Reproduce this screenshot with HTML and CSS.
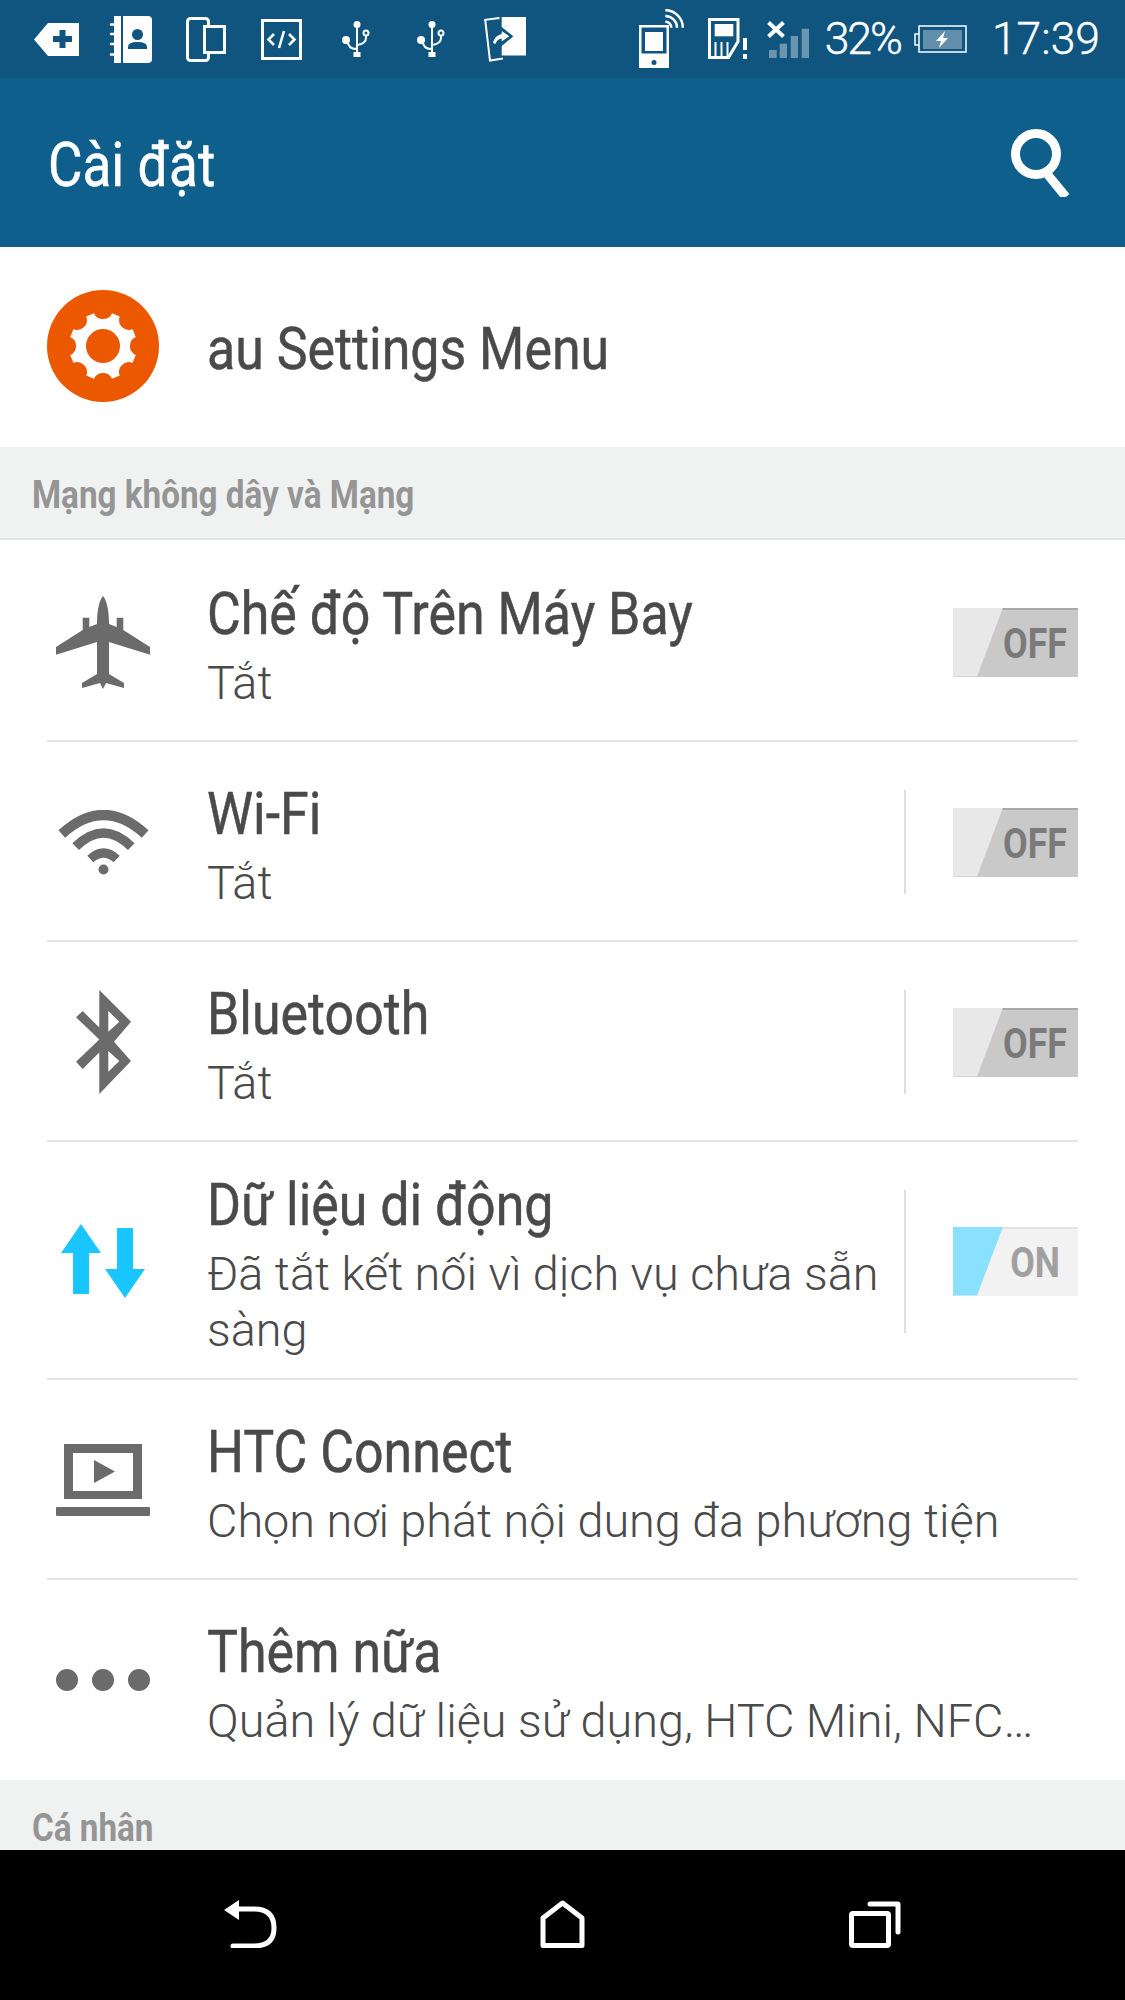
FILE: index.html
```html
<!DOCTYPE html>
<html lang="vi">
<head>
<meta charset="utf-8">
<meta name="viewport" content="width=device-width, initial-scale=1.0">
<title>Cài đặt</title>
<link rel="stylesheet" href="styles.css">
</head>
<body>
<div class="screen">
	<div class="statusbar">
		<div class="status-left">
			<svg class="ic-tag" width="45" height="33" viewBox="0 0 45 33"><path fill="#fff" fill-rule="evenodd" d="M0 16.500 14 0H45V33H14ZM25.500 7V13H19V19H25.500V25H31.500V19H38V13H31.500V7Z"/></svg>
			<svg class="ic-contacts" width="43" height="47" viewBox="0 0 43 47"><path fill="#fff" fill-rule="evenodd" d="M14 0H39Q43 0 43 4V43Q43 47 39 47H14ZM28.500 13A5.500 5.500 0 1 0 28.500 24 5.500 5.500 0 1 0 28.500 13ZM19 33H38V31Q38 26 28.500 26 19 26 19 31Z"/><path fill="#fff" d="M5 0H12V47H5Z"/><path fill="none" stroke="#fff" stroke-width="2.500" stroke-linecap="round" d="M2 8.500H9M2 18H9M2 28H9M2 38.500H9"/></svg>
			<svg class="ic-devices" width="40" height="45" viewBox="0 0 40 45"><rect x="1.500" y="1.500" width="21" height="42" rx="3" fill="none" stroke="#fff" stroke-width="3"/><rect x="18.500" y="9.500" width="20" height="26" fill="#0f5580" stroke="#fff" stroke-width="3"/></svg>
			<svg class="ic-code" width="41" height="41" viewBox="0 0 41 41"><rect x="1.500" y="1.500" width="38" height="38" fill="none" stroke="#fff" stroke-width="3"/><path fill="none" stroke="#fff" stroke-width="2.600" d="M13 15 7.500 20.500 13 26M28 15 33.500 20.500 28 26M23 12 18 29"/></svg>
			<svg class="ic-usb" width="28" height="36" viewBox="0 0 28 36"><circle cx="15" cy="3.500" r="3.500" fill="#fff"/><circle cx="4" cy="19" r="4" fill="#fff"/><circle cx="24" cy="12" r="2.500" fill="none" stroke="#fff" stroke-width="2"/><rect x="11.500" y="31" width="7" height="5" fill="#fff"/><path fill="none" stroke="#fff" stroke-width="2" d="M15 4V32M5 21 8 26Q10 28 15 28M24 14V17Q24 23 15 24"/></svg>
			<svg class="ic-usb" width="28" height="36" viewBox="0 0 28 36"><circle cx="15" cy="3.500" r="3.500" fill="#fff"/><circle cx="4" cy="19" r="4" fill="#fff"/><circle cx="24" cy="12" r="2.500" fill="none" stroke="#fff" stroke-width="2"/><rect x="11.500" y="31" width="7" height="5" fill="#fff"/><path fill="none" stroke="#fff" stroke-width="2" d="M15 4V32M5 21 8 26Q10 28 15 28M24 14V17Q24 23 15 24"/></svg>
			<svg class="ic-share" width="42" height="45" viewBox="0 0 42 45"><path fill="#fff" d="M17.700 0H42V38.500H17.700V29L29.300 19.300 17.700 10Z"/><path fill="none" stroke="#fff" stroke-width="2" d="M15.500 1 1.200 2.800 6 43.500 19 41.500"/><path fill="#fff" d="M17.700 14 25.300 19.300 17.700 24.500V21.500Q13 22 11.500 27L9 26Q10.500 18.500 17.700 17Z"/></svg>
		</div>
		<div class="status-right">
			<svg class="ic-phone" width="45" height="60" viewBox="0 0 45 60"><rect y="16" width="30" height="43" fill="#fff"/><rect x="2.500" y="18.500" width="25" height="26" fill="#0f5580"/><rect x="6" y="23" width="18" height="19" fill="#fff"/><circle cx="15" cy="53.500" r="2.500" fill="#0f5580"/><path fill="none" stroke="#fff" stroke-width="2.500" d="M26.300 1.200A17.500 17.500 0 0 1 43.800 18.700M26.300 7A11.700 11.700 0 0 1 38 18.700M26.300 12.700A6 6 0 0 1 32.300 18.700"/></svg>
			<svg class="ic-sim" width="39" height="42" viewBox="0 0 39 42"><path fill="none" stroke="#fff" stroke-width="3" d="M1.500 1.500H30V23.500L20.500 39.500H1.500Z"/><rect x="6.700" y="6" width="18.600" height="12.300" fill="#fff"/><path fill="none" stroke="#fff" stroke-width="2" d="M7.500 24V39M13.500 24V39M19.500 24V39"/><path fill="#fff" d="M35 20H39V32H35ZM35 36H39V41H35Z"/></svg>
			<svg class="ic-signal" width="43" height="37" viewBox="0 0 43 37"><path fill="none" stroke="#fff" stroke-width="4" d="M1.500 1.500 16.500 15.500M16.500 1.500 1.500 15.500"/><g fill="#fff" opacity=".38"><rect x="2" y="29" width="7.700" height="8"/><rect x="12.700" y="22.700" width="7.300" height="14.300"/><rect x="23.700" y="15" width="7.300" height="22"/><rect x="34.700" y="7.700" width="7.300" height="29.300"/></g></svg>
			<span class="status-pct">32%</span>
			<svg class="ic-battery" width="53" height="28" viewBox="0 0 53 28"><path fill="none" stroke="#fff" stroke-width="1.500" d="M5 9H1V20H5M5 1H52V27H5Z"/><rect x="9" y="5" width="39" height="19" fill="#fff" opacity=".35"/><path fill="#fff" d="M31 6 22 16H27L25 23 34 13H29Z"/></svg>
			<span class="status-time">17:39</span>
		</div>
	</div>
	<div class="appbar">
		<span class="appbar-title"><span class="narrow">Cài đặt</span></span>
		<svg class="ic-search" width="58" height="68" viewBox="0 0 58 68"><circle cx="25" cy="25" r="20.500" fill="none" stroke="#fff" stroke-width="9"/><path fill="none" stroke="#fff" stroke-width="9" d="M37 46 55 68"/></svg>
	</div>
	<div class="list">
		<div class="au-row">
			<svg width="112" height="112" viewBox="0 0 112 112"><circle cx="56" cy="56" r="56" fill="#ec5800"/><path fill="#fff" fill-rule="evenodd" d="M46.900 23.200A10 10 0 0 0 65.100 23.200L72.700 26.400A10 10 0 0 0 85.600 39.300L88.800 46.900A10 10 0 0 0 88.800 65.100L85.600 72.700A10 10 0 0 0 72.700 85.600L65.100 88.800A10 10 0 0 0 46.900 88.800L39.300 85.600A10 10 0 0 0 26.400 72.700L23.200 65.100A10 10 0 0 0 23.200 46.900L26.400 39.300A10 10 0 0 0 39.300 26.400ZM56 39A17 17 0 1 0 56 73 17 17 0 1 0 56 39Z"/></svg>
			<span class="au-title"><span class="narrow">au Settings Menu</span></span>
		</div>
		<div class="section"><span class="narrow">Mạng không dây và Mạng</span></div>

		<div class="row first">
			<div class="row-icon"><svg width="94" height="93" viewBox="0 0 94 93"><path fill="#6b6b6b" d="M47 0C50 3 53 12 53 28L60.700 31V21.700H67.300V34L94 51V58.700L53 46V78L68 87V92L50 87 47 93 44 87 26 92V87L41 78V46L0 58.700V51L26.700 34V21.700H33.300V31L41 28C41 12 44 3 47 0Z"/></svg></div>
			<div class="row-text"><div class="row-title"><span class="narrow">Chế độ Trên Máy Bay</span></div><div class="row-sub">Tắt</div></div>
			<div class="toggle off"><span class="narrow">OFF</span></div>
		</div>
		<div class="row">
			<div class="row-icon"><svg width="91" height="65" viewBox="0 0 91 65"><g fill="none" stroke="#6b6b6b"><path stroke-width="10" d="M3.800 24Q45.500 -14 87.200 24"/><path stroke-width="9.500" d="M17.700 36.700Q45.500 9.300 73.300 36.700"/><path stroke-width="9" d="M32.300 49Q45.500 37 58.700 49"/></g><circle cx="45.500" cy="59.500" r="5" fill="#6b6b6b"/></svg></div>
			<div class="row-text"><div class="row-title"><span class="narrow">Wi-Fi</span></div><div class="row-sub">Tắt</div></div>
			<div class="vline"></div>
			<div class="toggle off"><span class="narrow">OFF</span></div>
		</div>
		<div class="row">
			<div class="row-icon"><svg width="55" height="104" viewBox="0 0 55 104"><path fill="#6b6b6b" fill-rule="evenodd" d="M23.300 0 55 31.700 38 51.700 55 71 23.300 104V62.400L6.700 79 0 71.700 23.300 49.500 0 27.300 6.700 21 23.300 37.600ZM32.300 21V41.700L43.300 31.700ZM32.300 61V81.700L43.300 71Z"/></svg></div>
			<div class="row-text"><div class="row-title"><span class="narrow">Bluetooth</span></div><div class="row-sub">Tắt</div></div>
			<div class="vline"></div>
			<div class="toggle off"><span class="narrow">OFF</span></div>
		</div>
		<div class="row tall">
			<div class="row-icon"><svg width="84" height="74" viewBox="0 0 84 74"><path fill="#1ac6ff" d="M20 0 40 29H28V70H12V29H0ZM64 74 44 45H56V4H72V45H84Z"/></svg></div>
			<div class="row-text"><div class="row-title"><span class="narrow">Dữ liệu di động</span></div><div class="row-sub">Đã tắt kết nối vì dịch vụ chưa sẵn sàng</div></div>
			<div class="vline"></div>
			<div class="toggle on"><span class="narrow">ON</span></div>
		</div>
		<div class="row">
			<div class="row-icon"><svg width="94" height="72" viewBox="0 0 94 72"><path fill="#6b6b6b" fill-rule="evenodd" d="M8 0H86V55H8ZM17 9V47H77V9ZM38 16 59 27.500 38 39Z"/><rect y="63" width="94" height="9" rx="1" fill="#6b6b6b"/></svg></div>
			<div class="row-text"><div class="row-title"><span class="narrow">HTC Connect</span></div><div class="row-sub">Chọn nơi phát nội dung đa phương tiện</div></div>
		</div>
		<div class="row last">
			<div class="row-icon"><svg width="94" height="22" viewBox="0 0 94 22"><g fill="#6b6b6b"><circle cx="11" cy="11" r="11"/><circle cx="47" cy="11" r="11"/><circle cx="83" cy="11" r="11"/></g></svg></div>
			<div class="row-text"><div class="row-title"><span class="narrow">Thêm nữa</span></div><div class="row-sub">Quản lý dữ liệu sử dụng, HTC Mini, NFC…</div></div>
		</div>
		<div class="section"><span class="narrow">Cá nhân</span></div>
	</div>
	<div class="navbar">
		<div class="nav-cell"><svg width="53" height="48" viewBox="0 0 53 48"><path fill="#fff" d="M0 10 15 0V20Z"/><path fill="none" stroke="#fff" stroke-width="5" stroke-linecap="round" d="M12 9H30Q50 9 50 28 50 46 30 46H9"/></svg></div>
		<div class="nav-cell"><svg width="45" height="48" viewBox="0 0 45 48"><path fill="none" stroke="#fff" stroke-width="5" stroke-linejoin="round" d="M3 45.500V18L22.500 3 42 18V45.500Z"/></svg></div>
		<div class="nav-cell"><svg width="52" height="48" viewBox="0 0 52 48"><rect x="2.500" y="13.500" width="37" height="32" rx="1.500" fill="none" stroke="#fff" stroke-width="5"/><path fill="none" stroke="#fff" stroke-width="5" stroke-linecap="round" stroke-linejoin="round" d="M21 4H49V32"/></svg></div>
	</div>
</div>
</body>
</html>
```
FILE: styles.css
```css
* { box-sizing: border-box }
html, body { margin: 0; padding: 0; background: #fff }
body { font-family: Roboto, "Noto Sans", sans-serif; color: #4a4a4a }
.screen { width: 1125px; height: 2000px; display: flex; flex-direction: column; overflow: hidden }
.narrow { display: inline-block; transform: scaleX(.865); transform-origin: left center; white-space: nowrap; -webkit-text-stroke: .5px currentColor }

.statusbar { height: 78px; background: #0f5580; color: #fff; display: flex; align-items: center; justify-content: space-between; padding: 0 25px 0 34px; flex: none }
.status-left, .status-right { display: flex; align-items: center }
.status-left svg, .status-right svg { display: block; flex: none }
.ic-contacts { margin-left: 30px }
.ic-devices { margin-left: 34px }
.ic-code { margin-left: 35px }
.status-left .ic-usb { margin-left: 40px }
.status-left .ic-usb + .ic-usb { margin-left: 47px }
.status-left .ic-share { margin-left: 39px }
.ic-sim { margin-left: 24px }
.ic-signal { margin-left: 20px }
.status-pct, .status-time { font-size: 44.5px; font-weight: 300; line-height: 78px; -webkit-text-stroke: .4px #fff }
.status-pct { margin-left: 15px; letter-spacing: -2px }
.ic-battery { margin-left: 13px }
.status-time { margin-left: 25px }

.appbar { height: 169px; background: #0f5f8c; color: #fff; display: flex; align-items: center; justify-content: space-between; padding: 0 56px 0 48px; flex: none }
.appbar-title { font-size: 62px; padding-top: 4px }
.appbar-title .narrow { transform: scaleX(.855) }
.ic-search { display: block }

.list { flex: 1; overflow: hidden; background: #fff }
.au-row { height: 200px; display: flex; align-items: center; padding: 0 0 2px 47px }
.au-title { font-size: 60px; margin-left: 48px; padding-top: 4px }

.section { height: 93px; background: #f0f2f1; border-bottom: 2px solid #e2e2e2; padding: 26px 0 0 32px; font-size: 38px; line-height: 44px; font-weight: 700; color: #959595 }
.section .narrow { transform: scaleX(.875); -webkit-text-stroke: 0 }

.row { margin: 0 47px; display: flex; align-items: center; padding: 31px 0 29px; border-bottom: 2px solid #e4e4e4 }
.row.first { padding-top: 33px }
.row.tall { padding: 22px 0 20px }
.row.last { border-bottom-color: transparent }
.row-icon { width: 112px; margin-right: 48px; display: flex; justify-content: center; flex: none }
.row-icon svg { display: block }
.row-text { flex: 1; min-width: 0; padding-right: 20px }
.row-title { font-size: 60px; line-height: 82px; white-space: nowrap }
.row-sub { font-size: 46.8px; font-weight: 300; line-height: 56px }

.vline { width: 2px; height: 104px; background: #dedede; margin-right: 47px; flex: none }
.row.tall .vline { height: 143px }
.toggle { position: relative; width: 125px; height: 69px; flex: none; display: flex; align-items: center; justify-content: flex-end; font-size: 43px; font-weight: 700; border-top: 2px solid }
.toggle::before { content: ""; position: absolute; left: 0; top: -2px; bottom: 0; width: 50px; clip-path: polygon(0 0, 100% 0, 48% 100%, 0 100%) }
.toggle .narrow { position: relative; transform: scaleX(.83); transform-origin: right center; -webkit-text-stroke: 0 }
.toggle.off { background: #c9c9c9; border-top-color: #a9a9a9; color: #7a7a7a; padding-right: 11px }
.toggle.off::before { background: #e8e8e8 }
.toggle.on { background: #f2f2f2; border-top-color: #e2e2e2; color: #a0a0a0; padding-right: 18px }
.toggle.on::before { background: #8ae0ff }

.navbar { height: 150px; background: #000; display: flex; padding: 0 94px; flex: none }
.nav-cell { flex: 1; display: flex; align-items: flex-start; justify-content: center; padding-top: 50px }
.nav-cell svg { display: block }
```
